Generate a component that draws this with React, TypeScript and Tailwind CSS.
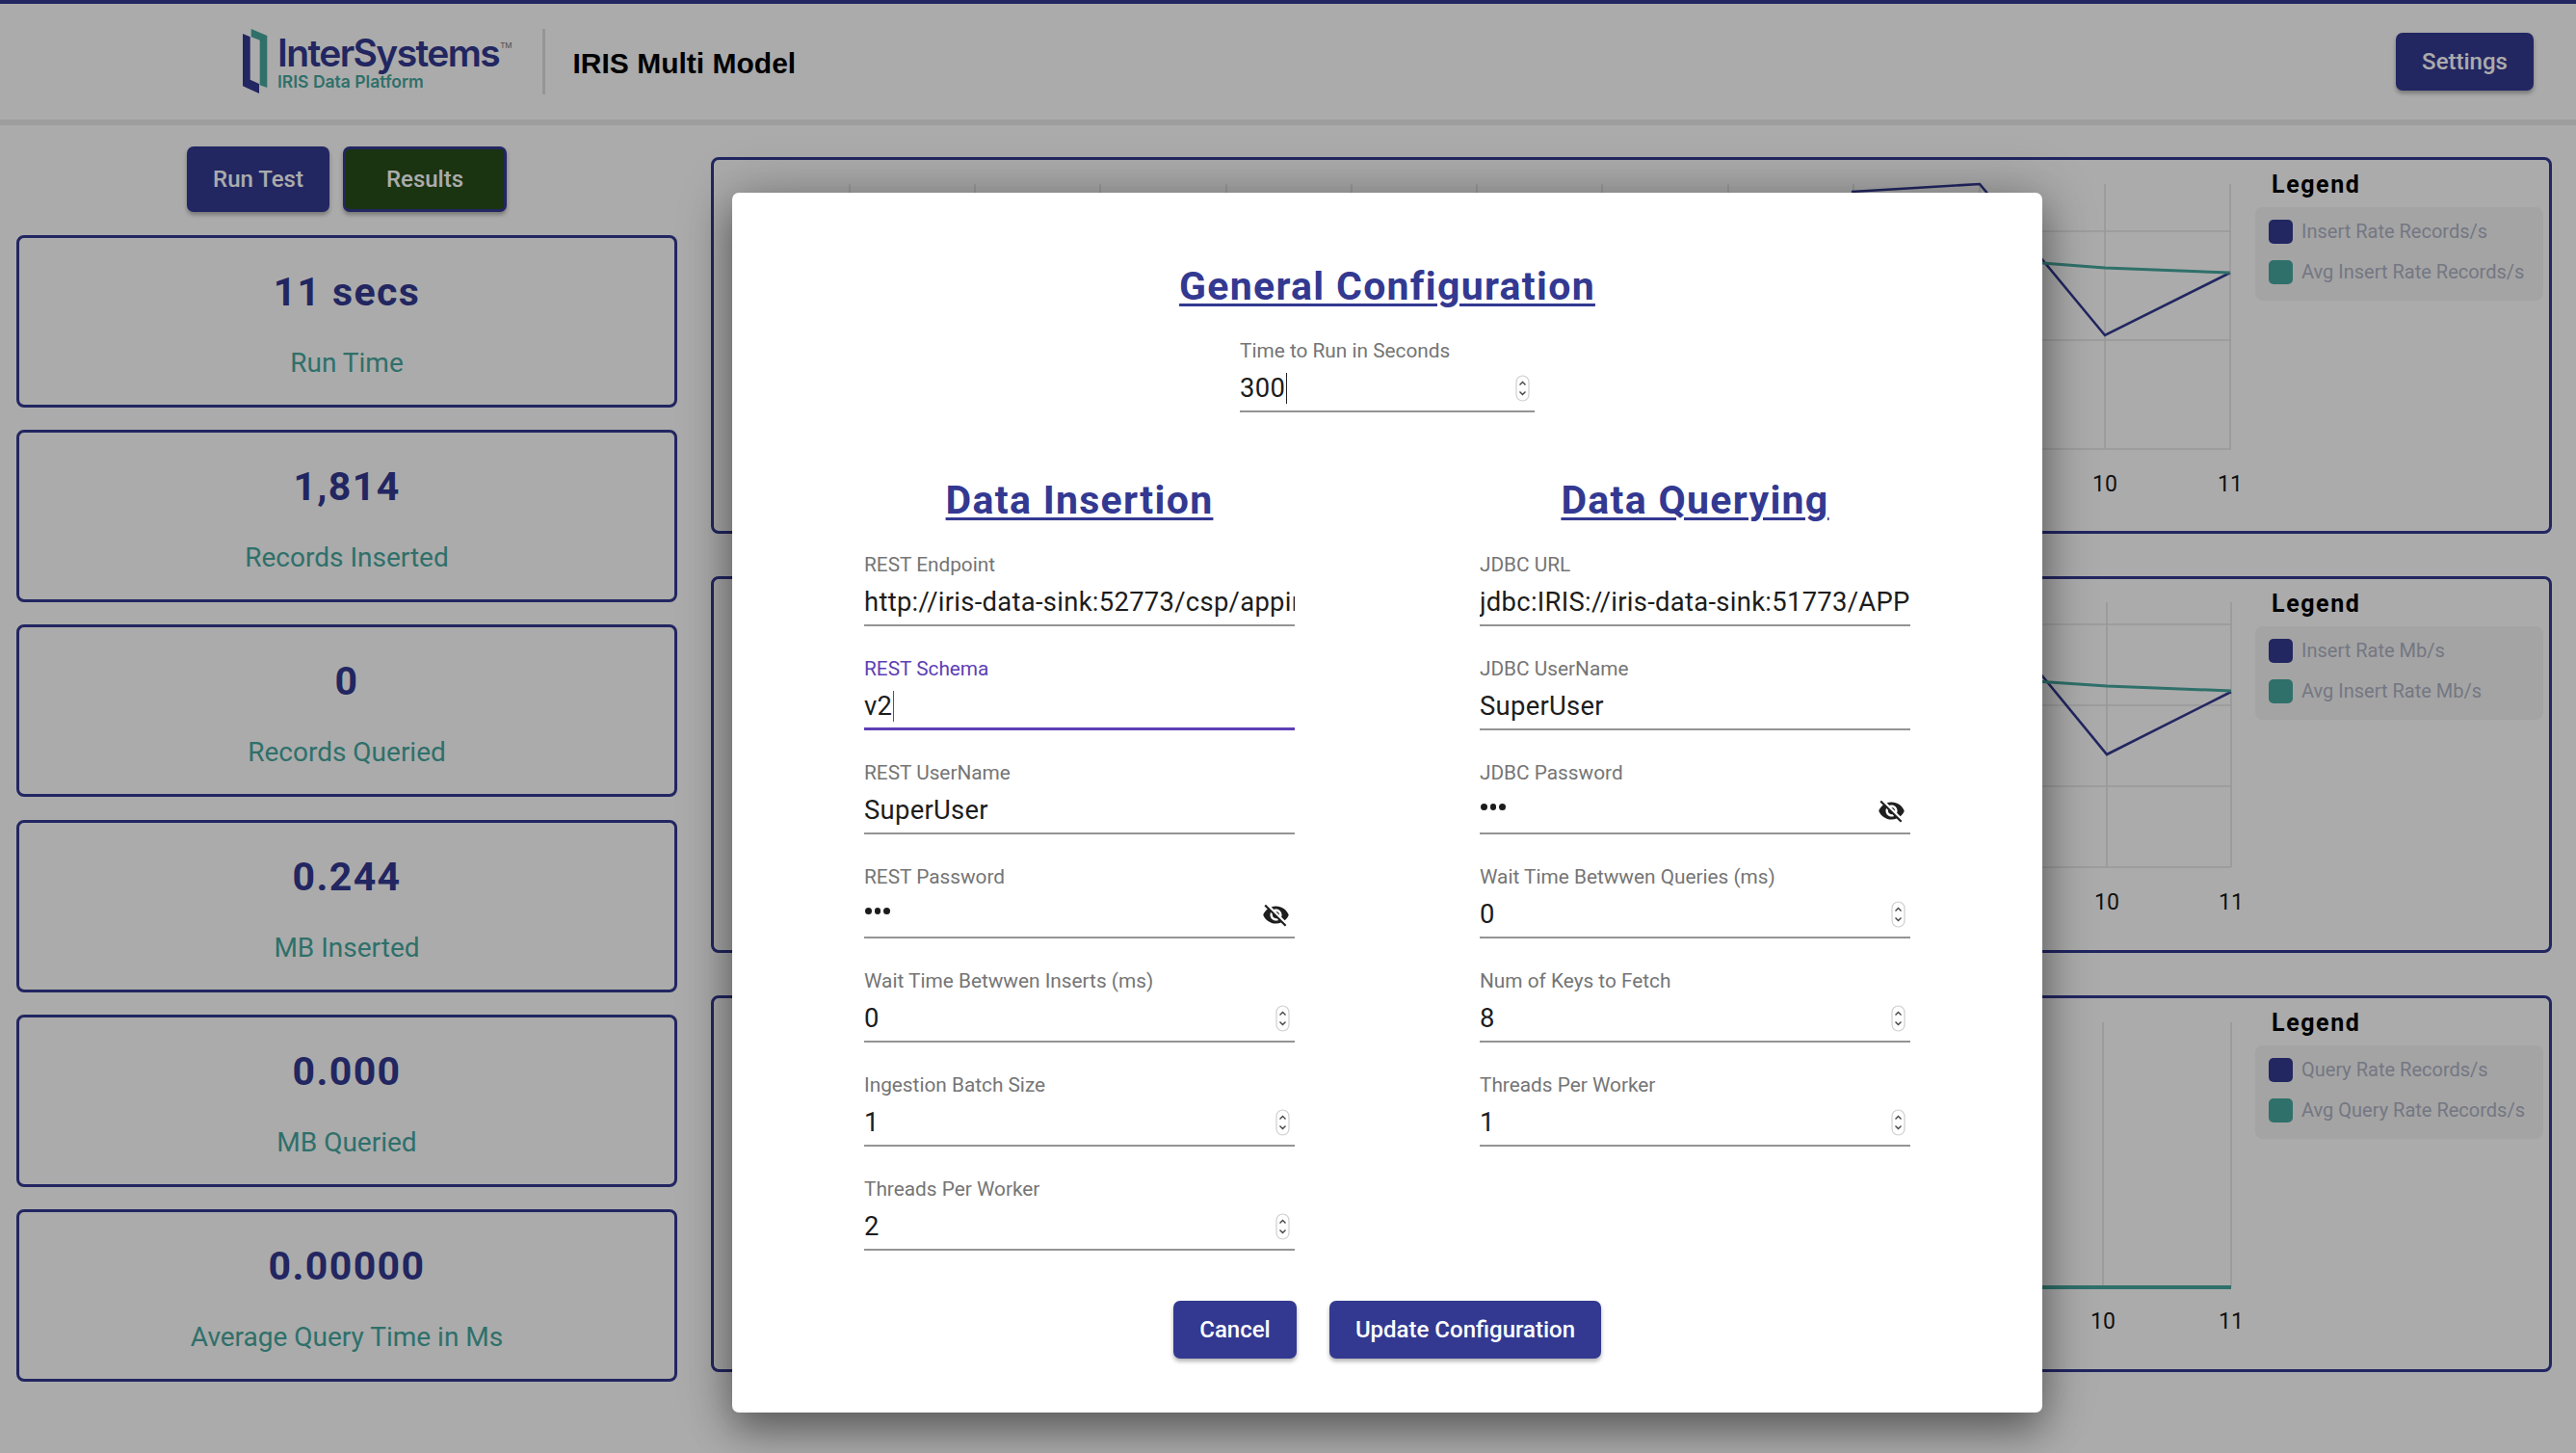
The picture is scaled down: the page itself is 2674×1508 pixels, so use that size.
import React from "react";

const font = { fontFamily: "Roboto, 'Liberation Sans', sans-serif" };

function Spinner() {
  return (
    <svg width="15" height="28" viewBox="0 0 15 28" className="shrink-0">
      <rect x="1" y="1" width="13" height="26" rx="6.5" fill="#fff" stroke="#cfcfcf" strokeWidth="1.2" />
      <path d="M4.5 10.5 L7.5 7.5 L10.5 10.5" fill="none" stroke="#444" strokeWidth="1.4" />
      <path d="M4.5 17.5 L7.5 20.5 L10.5 17.5" fill="none" stroke="#444" strokeWidth="1.4" />
    </svg>
  );
}

function EyeOff() {
  return (
    <svg width="29" height="29" viewBox="0 0 24 24" fill="#1f1f1f" className="shrink-0">
      <path d="M12 7c2.76 0 5 2.24 5 5 0 .65-.13 1.26-.36 1.83l2.92 2.92c1.51-1.26 2.7-2.89 3.43-4.75-1.73-4.39-6-7.5-11-7.5-1.4 0-2.74.25-3.98.7l2.16 2.16C10.74 7.13 11.35 7 12 7zM2 4.27l2.28 2.28.46.46C3.08 8.3 1.78 10.02 1 12c1.73 4.39 6 7.5 11 7.5 1.55 0 3.03-.3 4.38-.84l.42.42L19.73 22 21 20.73 3.27 3 2 4.27zM7.53 9.8l1.55 1.55c-.05.21-.08.43-.08.65 0 1.66 1.34 3 3 3 .22 0 .44-.03.65-.08l1.55 1.55c-.67.33-1.41.53-2.2.53-2.76 0-5-2.24-5-5 0-.79.2-1.53.53-2.2zm4.31-.78l3.15 3.15.02-.16c0-1.66-1.34-3-3-3l-.17.01z" />
    </svg>
  );
}

type FieldProps = {
  label: string;
  value: string;
  kind?: "text" | "number" | "password";
  focused?: boolean;
  caret?: boolean;
};

function Field({ label, value, kind = "text", focused, caret }: FieldProps) {
  return (
    <div className="flex h-[108px] w-full flex-col justify-end">
      <div className={`text-[20.8px] leading-[24px] ${focused ? "text-[#5e3fb5]" : "text-[#757575]"}`}>{label}</div>
      <div
        className={`mt-[8px] flex h-[44px] items-center justify-between pb-[4px] ${
          focused ? "border-b-[3px] border-[#5e3fb5]" : "border-b-2 border-[#949494]"
        }`}
      >
        <div className="flex min-w-0 flex-1 items-center overflow-hidden whitespace-nowrap text-[27.4px] leading-[36px] tracking-[0.3px] text-[#1c1c1c]">
          {kind === "password" ? (
            <span className="flex gap-[3px] pb-[7px] pl-[1px]">
              <i className="block h-[6.5px] w-[6.5px] rounded-full bg-[#1c1c1c]" />
              <i className="block h-[6.5px] w-[6.5px] rounded-full bg-[#1c1c1c]" />
              <i className="block h-[6.5px] w-[6.5px] rounded-full bg-[#1c1c1c]" />
            </span>
          ) : (
            <span>{value}</span>
          )}
          {caret && <span className={`ml-[1px] block h-[32px] w-[1px] ${focused ? "bg-[#5e3fb5]" : "bg-[#222]"}`} />}
        </div>
        {kind === "number" && (
          <span className="mr-[5px]">
            <Spinner />
          </span>
        )}
        {kind === "password" && (
          <span className="mr-[5px]">
            <EyeOff />
          </span>
        )}
      </div>
    </div>
  );
}

function Heading({ children }: { children: React.ReactNode }) {
  return (
    <h2 className="text-center text-[41px] font-bold leading-[48px] tracking-[1.3px] text-[#333991] underline decoration-[3px] underline-offset-[4px]">
      {children}
    </h2>
  );
}

function Stat({ value, label }: { value: string; label: string }) {
  return (
    <div className="flex h-[179px] w-[686px] flex-col items-center rounded-[8px] border-[3px] border-[#333991] bg-white pt-[30px]">
      <div className="text-[41px] font-bold leading-[52px] tracking-[1.4px] text-[#333991]">{value}</div>
      <div className="mt-[30px] text-[28px] leading-[36px] text-[#47a89e]">{label}</div>
    </div>
  );
}

function Legend({ a, b }: { a: string; b: string }) {
  return (
    <div className="mr-[6px] w-[299px] shrink-0 pt-[11px]">
      <div className="pl-[17px] text-[25px] font-bold leading-[30px] tracking-[1.6px] text-black">Legend</div>
      <div className="mt-[8px] flex h-[97px] flex-col gap-[17px] rounded-[8px] bg-[#f5f5f5] pl-[14px] pt-[13px]">
        <div className="flex items-center gap-[9px]">
          <span className="h-[25px] w-[25px] rounded-[5px] bg-[#333991]" />
          <span className="text-[20px] leading-[25px] text-[#aeb2c4]">{a}</span>
        </div>
        <div className="flex items-center gap-[9px]">
          <span className="h-[25px] w-[25px] rounded-[5px] bg-[#47a89e]" />
          <span className="text-[20px] leading-[25px] text-[#aeb2c4]">{b}</span>
        </div>
      </div>
    </div>
  );
}

const GRID = "#e4e4e4";
const NAVY = "#333991";
const TEAL = "#47a89e";

function Plot({
  y0,
  top,
  bottom,
  rows,
  cols,
  navy,
  teal,
  labelY,
  labels,
  tealWidth = 3,
}: {
  y0: number;
  top: number;
  bottom: number;
  rows: number[];
  cols: number[];
  navy?: string;
  teal: string;
  labelY: number;
  labels: [number, string][];
  tealWidth?: number;
}) {
  const h = 391 - 6;
  return (
    <svg className="min-w-0 flex-1" height={h} viewBox={`741 ${y0} 1600 ${h}`}>
      {rows.map((y) => (
        <line key={y} x1="760" x2="2316" y1={y} y2={y} stroke={GRID} strokeWidth="1.6" />
      ))}
      {cols.map((x) => (
        <line key={x} x1={x} x2={x} y1={top} y2={bottom} stroke={GRID} strokeWidth="1.6" />
      ))}
      <line x1="760" x2="2316" y1={bottom} y2={bottom} stroke={GRID} strokeWidth="1.6" />
      {navy && <polyline points={navy} fill="none" stroke={NAVY} strokeWidth="2.6" />}
      <polyline points={teal} fill="none" stroke={TEAL} strokeWidth={tealWidth} />
      {labels.map(([x, t]) => (
        <text key={t} x={x} y={labelY} textAnchor="middle" fontSize="23" fill="#1a1a1a" style={font}>
          {t}
        </text>
      ))}
    </svg>
  );
}

function ChartCard({ children }: { children: React.ReactNode }) {
  return (
    <div className="flex h-[391px] w-full items-start rounded-[8px] border-[3px] border-[#333991] bg-white">{children}</div>
  );
}

function Logo() {
  return (
    <div className="flex items-center">
      <svg width="26" height="68" viewBox="0 0 26 68" className="shrink-0">
        <path d="M0 5 L7.7 8.3 L7.7 52.7 L17 57 L17 67 L0 59.3 Z" fill="#333991" />
        <path d="M8.7 0 L25.3 7 L25.3 61 L17.7 58.3 L17.7 11.7 L8.7 8.3 Z" fill="#47a89e" />
      </svg>
      <div className="ml-[10px]">
        <div className="flex items-start pt-[2px]">
          <span
            className="text-[39px] font-semibold leading-[38px] tracking-[-1.6px] text-[#333991]"
            style={{ fontFamily: "Inter, sans-serif" }}
          >
            InterSystems
          </span>
          <span className="ml-[1px] mt-[6px] text-[8px] leading-[10px] text-[#777]" style={{ fontFamily: "Inter, sans-serif" }}>
            TM
          </span>
        </div>
        <div
          className="mt-[1px] text-[17.5px] font-semibold leading-[20px] text-[#47a89e]"
          style={{ fontFamily: "Inter, sans-serif" }}
        >
          IRIS Data Platform
        </div>
      </div>
    </div>
  );
}

export default function App() {
  return (
    <div className="relative h-[1508px] w-full overflow-hidden bg-white" style={font}>
      <header className="flex h-[130px] items-center justify-between border-t-4 border-b-[6px] border-t-[#333991] border-b-[#ececec] pl-[252px] pr-[44px]">
        <div className="flex items-center">
          <Logo />
          <span className="ml-[31px] h-[68px] w-[3px] bg-[#e0e0e0]" />
          <span
            className="ml-[29px] pt-[3px] text-[30px] font-bold leading-[36px] text-black"
            style={{ fontFamily: "'Liberation Sans', sans-serif" }}
          >
            IRIS Multi Model
          </span>
        </div>
        <button className="h-[60px] w-[143px] rounded-[7px] bg-[#333991] text-[24px] font-medium text-white shadow-[0_3px_4px_rgba(0,0,0,0.3)]">
          Settings
        </button>
      </header>

      <main className="flex">
        <section className="ml-[17px] flex w-[686px] shrink-0 flex-col items-center pt-[22px]">
          <div className="mb-[24px] flex gap-[14px]">
            <button className="h-[68px] w-[148px] rounded-[7px] bg-[#333991] text-[24px] font-medium text-white shadow-[0_3px_4px_rgba(0,0,0,0.3)]">
              Run Test
            </button>
            <button className="h-[68px] w-[170px] rounded-[7px] border-[3px] border-[#333991] bg-[#274d18] text-[24px] font-medium text-white shadow-[0_3px_4px_rgba(0,0,0,0.3)]">
              Results
            </button>
          </div>
          <div className="flex flex-col gap-[23.2px]">
            <Stat value="11 secs" label="Run Time" />
            <Stat value="1,814" label="Records Inserted" />
            <Stat value="0" label="Records Queried" />
            <Stat value="0.244" label="MB Inserted" />
            <Stat value="0.000" label="MB Queried" />
            <Stat value="0.00000" label="Average Query Time in Ms" />
          </div>
        </section>

        <section className="ml-[35px] mr-[25px] flex min-w-0 flex-1 flex-col gap-[44px] pt-[33px]">
          <ChartCard>
            <Plot
              y0={166}
              top={191}
              bottom={466}
              rows={[240, 353]}
              cols={[882, 1012, 1142, 1273, 1403, 1533, 1663, 1794, 1924, 2055, 2185, 2315]}
              navy="1922,199 2055,191 2185,348 2315,283"
              teal="1922,265 2055,268 2120,273 2185,278 2315,283"
              labelY={510}
              labels={[
                [2185, "10"],
                [2315, "11"],
              ]}
            />
            <Legend a="Insert Rate Records/s" b="Avg Insert Rate Records/s" />
          </ChartCard>
          <ChartCard>
            <Plot
              y0={601}
              top={625}
              bottom={900}
              rows={[648, 732, 816]}
              cols={[2057, 2187, 2316]}
              navy="2057,625 2187,783 2316,718"
              teal="2057,703 2120,707.5 2187,712 2316,717"
              labelY={944}
              labels={[
                [2187, "10"],
                [2316, "11"],
              ]}
            />
            <Legend a="Insert Rate Mb/s" b="Avg Insert Rate Mb/s" />
          </ChartCard>
          <ChartCard>
            <Plot
              y0={1036}
              top={1061}
              bottom={1336}
              rows={[]}
              cols={[2050, 2183, 2316]}
              teal="760,1336 2316,1336"
              tealWidth={4}
              labelY={1379}
              labels={[
                [2183, "10"],
                [2316, "11"],
              ]}
            />
            <Legend a="Query Rate Records/s" b="Avg Query Rate Records/s" />
          </ChartCard>
        </section>
      </main>

      {/* backdrop + dialog */}
      <div className="absolute inset-0 flex justify-center bg-black/[0.33] pl-[206px] pt-[200px]">
        <div className="relative h-[1266px] w-[1360px] rounded-[7px] bg-white shadow-[0_18px_40px_rgba(0,0,0,0.38),0_0_60px_rgba(0,0,0,0.22)]">
          <div className="flex flex-col items-center pt-[73px]">
            <Heading>General Configuration</Heading>
            <div className="mt-[-1px] w-[306px]">
              <Field label="Time to Run in Seconds" value="300" kind="number" caret />
            </div>
          </div>
          <div className="mt-[67px] grid grid-cols-[447px_447px] justify-center gap-x-[192px]">
            <div>
              <Heading>Data Insertion</Heading>
              <div className="mt-[-1px]">
                <Field label="REST Endpoint" value="http://iris-data-sink:52773/csp/appint/rest" />
                <Field label="REST Schema" value="v2" focused caret />
                <Field label="REST UserName" value="SuperUser" />
                <Field label="REST Password" value="***" kind="password" />
                <Field label="Wait Time Betwwen Inserts (ms)" value="0" kind="number" />
                <Field label="Ingestion Batch Size" value="1" kind="number" />
                <Field label="Threads Per Worker" value="2" kind="number" />
              </div>
            </div>
            <div>
              <Heading>Data Querying</Heading>
              <div className="mt-[-1px]">
                <Field label="JDBC URL" value="jdbc:IRIS://iris-data-sink:51773/APPINT" />
                <Field label="JDBC UserName" value="SuperUser" />
                <Field label="JDBC Password" value="***" kind="password" />
                <Field label="Wait Time Betwwen Queries (ms)" value="0" kind="number" />
                <Field label="Num of Keys to Fetch" value="8" kind="number" />
                <Field label="Threads Per Worker" value="1" kind="number" />
              </div>
            </div>
          </div>
          <div className="mt-[52px] flex justify-center gap-[34px]">
            <button className="h-[60px] w-[128px] rounded-[7px] bg-[#333991] text-[24px] font-medium text-white shadow-[0_3px_4px_rgba(0,0,0,0.3)]">
              Cancel
            </button>
            <button className="h-[60px] w-[282px] rounded-[7px] bg-[#333991] text-[24px] font-medium text-white shadow-[0_3px_4px_rgba(0,0,0,0.3)]">
              Update Configuration
            </button>
          </div>
        </div>
      </div>
    </div>
  );
}
